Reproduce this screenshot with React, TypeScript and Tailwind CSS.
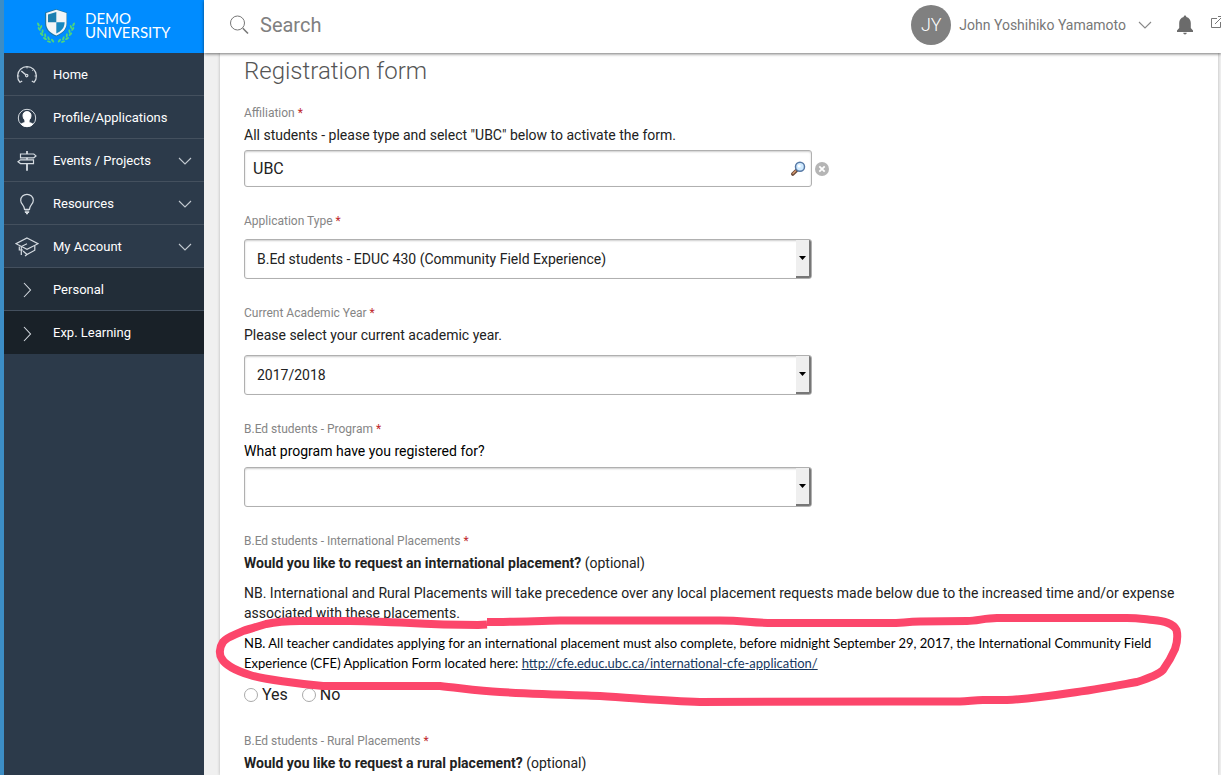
import { useState } from "react"
import type { ReactNode } from "react"

function HomeIcon() {
  return (
    <svg viewBox="0 0 24 24" className="h-6 w-6" fill="none" stroke="currentColor" strokeWidth="1.2">
      <path d="M7.200 18 L5 19.300 A9.400 9.400 0 1 1 19 19.300 L16.800 18" />
      <path d="M2.800 13 h1.600 M19.600 13 h1.600 M18.300 6.700 l-1 1 M12 3.800 v1.600" strokeWidth="1" />
      <path d="M6.300 8 L10.800 11.800" strokeWidth="1.500" />
      <circle cx="11.700" cy="12.600" r="1.200" />
    </svg>
  )
}

function ProfileIcon() {
  return (
    <svg viewBox="0 0 24 24" className="h-6 w-6" fill="none" stroke="currentColor" strokeWidth="1">
      <circle cx="12" cy="12" r="8.7" />
      <path
        d="M12 5.6 c-2.6 0 -4 1.6 -4 3.8 c0 1.8 .7 3.6 1.9 4.6 v1.8 c0 1.2 -3 1.2 -3.8 2.4 C8 20 10 20.6 12 20.6 s4 -.6 5.9 -2.4 c-.8 -1.2 -3.8 -1.2 -3.8 -2.4 V14 c1.2 -1 1.9 -2.8 1.9 -4.6 c0 -2.2 -1.4 -3.8 -4 -3.8z"
        fill="#fff"
        stroke="#fff"
      />
    </svg>
  )
}

function SignpostIcon() {
  return (
    <svg viewBox="0 0 24 24" className="h-6 w-6" fill="none" stroke="currentColor" strokeWidth="1.2">
      <path d="M5.500 5 H18.800 L21 6.900 L18.800 8.800 H5.500z M18.500 10.800 H5.500 L3 12.700 L5.500 14.600 H18.500z" />
      <path d="M12 2 V5 M12 8.800 v2 M12 14.600 V21.800" strokeWidth="1.800" />
    </svg>
  )
}

function BulbIcon() {
  return (
    <svg viewBox="0 0 24 24" className="h-6 w-6" fill="none" stroke="currentColor" strokeWidth="1.2">
      <path d="M9.500 17.300 C9.500 13.500 5.700 12 5.700 8.400 C5.700 4.800 8.500 2.300 12 2.300 s6.300 2.500 6.300 6.100 C18.300 12 14.500 13.500 14.500 17.300z" />
      <path d="M9.700 19 h4.600 M9.900 20.400 h4.200 M11 21.700 h2" />
    </svg>
  )
}

function CapIcon() {
  return (
    <svg viewBox="0 0 24 24" className="h-6 w-6" fill="none" stroke="currentColor" strokeWidth="1.2">
      <path d="M12 3 L23 8.700 L12 14.400 L1 8.700z" />
      <path d="M12 8.700 L6.300 11.500 V20 M4.300 11.500 V15 H8 M8 16 L12 19.500 L19.800 15.200 V10.600 M12 19.500 L10 21" />
    </svg>
  )
}

function ArrowRight() {
  return (
    <svg viewBox="0 0 24 24" className="h-6 w-6" fill="none" stroke="currentColor" strokeWidth="1.1">
      <path d="M9 5 L15.500 12 L9 19" />
    </svg>
  )
}

function ChevronDown() {
  return (
    <svg viewBox="0 0 14 8" className="h-2 w-3.5" fill="none" stroke="currentColor" strokeWidth="1.1">
      <path d="M1 1 L7 7 L13 1" />
    </svg>
  )
}

// leaves of one laurel branch: x, y, angle
const leaves = [
  [2.4, 15.5, 65],
  [5, 18, 110],
  [3.2, 20, 55],
  [6.5, 22.5, 100],
  [5.6, 25.2, 45],
  [9.2, 26.4, 85],
  [9, 29.6, 30],
  [12.6, 29.3, 70],
  [13, 32.6, 15],
  [16.6, 31.6, 50],
]

function Crest() {
  return (
    <svg viewBox="0 0 40 36" className="h-9 w-10">
      {["left", "right"].map((side) => (
        <g key={side} fill="#4fd67a" transform={side === "right" ? "translate(40 0) scale(-1 1)" : undefined}>
          {leaves.map(([x, y, angle], i) => (
            <ellipse key={i} cx={x} cy={y} rx="2.200" ry="1" transform={`rotate(${angle} ${x} ${y})`} />
          ))}
        </g>
      ))}
      <path d="M20 0 L31 3.400 V14.500 C31 21 26.500 25 20 27.500 C13.500 25 9 21 9 14.500 V3.400z" fill="#1a76a6" />
      <path d="M20.300 .8 L30.500 4 V14.500 C30.500 20 26.500 24 20.300 26.500 C14 24 10.200 20 10.200 14.500 V4z" fill="#f1f5f7" />
      <path d="M20.300 3 V13.300 H12 V5.600z" fill="#1b7fb0" />
      <path d="M20.300 13.300 H28.600 C28.600 19 25.500 22 20.300 24.400z" fill="#1687c0" />
    </svg>
  )
}

function LensIcon() {
  return (
    <svg viewBox="0 0 16 16" className="h-4 w-4">
      <path d="M6.500 9.500 L2.800 13" stroke="#6b4a3a" strokeWidth="3.600" strokeLinecap="round" />
      <path d="M5.500 10 L3 12.400" stroke="#d59a70" strokeWidth="1.400" strokeLinecap="round" />
      <circle cx="10" cy="5.700" r="4.500" fill="#cfeaff" stroke="#5779a5" strokeWidth="1.500" />
      <circle cx="9.200" cy="4.900" r="1.500" fill="#fff" />
    </svg>
  )
}

const menu = [
  { label: "Home", icon: <HomeIcon /> },
  { label: "Profile/Applications", icon: <ProfileIcon /> },
  { label: "Events / Projects", icon: <SignpostIcon />, expandable: true },
  { label: "Resources", icon: <BulbIcon />, expandable: true },
  { label: "My Account", icon: <CapIcon />, expandable: true },
  { label: "Personal", icon: <ArrowRight />, bg: "bg-[#222d38]" },
  { label: "Exp. Learning", icon: <ArrowRight />, bg: "bg-[#192128]" },
]

function Sidebar() {
  return (
    <aside className="w-[204px] shrink-0 border-l-4 border-[#3c8dc5] bg-[#2c3a4a]">
      <div className="flex h-[53px] items-center gap-[9px] bg-[#008cff] pl-8 text-white">
        <Crest />
        <div className="pb-1 font-['Lato',sans-serif] text-[15px] leading-[14px]">
          DEMO
          <br />
          UNIVERSITY
        </div>
      </div>
      <nav>
        {menu.map((item) => (
          <a
            key={item.label}
            href="#"
            className={`flex h-[43px] items-center border-b border-[#44505e] pt-0.5 pr-3 pl-[11px] text-[13px] text-white last:border-b-0 ${item.bg ?? ""}`}
          >
            <span className="text-[#d5dbe1]">{item.icon}</span>
            <span className="ml-3.5 flex-1">{item.label}</span>
            {item.expandable && (
              <span className="text-[#c3cad1]">
                <ChevronDown />
              </span>
            )}
          </a>
        ))}
      </nav>
    </aside>
  )
}

function TopBar() {
  return (
    <header className="relative z-10 flex h-[53px] shrink-0 items-center bg-white pb-[3px] pl-6 text-[#777] shadow-[0_1px_3px_rgba(0,0,0,0.55)]">
      <label className="flex min-w-0 flex-1 items-center gap-2">
        <svg viewBox="0 0 24 24" className="h-6 w-6 shrink-0" fill="none" stroke="currentColor">
          <circle cx="9.500" cy="10" r="7" strokeWidth="1" />
          <path d="M14.800 15.300 L20 20.500" strokeWidth="1.600" />
        </svg>
        <input
          type="text"
          placeholder="Search"
          aria-label="Search"
          className="min-w-0 flex-1 text-xl outline-none placeholder:text-[#808080]"
        />
      </label>
      <button className="flex shrink-0 items-center gap-2 text-sm">
        <span className="flex h-10 w-10 items-center justify-center rounded-full bg-[#808080] text-lg font-light text-white">
          JY
        </span>
        John Yoshihiko Yamamoto
        <span className="ml-1 text-[#888]">
          <ChevronDown />
        </span>
      </button>
      <button aria-label="Notifications" className="ml-6 shrink-0">
        <svg viewBox="0 0 18 20" className="h-5 w-[18px]" fill="#6b6b6b">
          <path d="M9 .5 c.9 0 1.300 .6 1.300 1.400 c2.900 .7 4.500 3 4.500 6 v5 l2.200 2.600 v1.500 H1 v-1.500 L3.200 12.900 v-5 c0 -3 1.600 -5.300 4.500 -6 C7.700 1.100 8.100 .5 9 .5z M7.300 17.800 h3.400 c0 1 -.7 1.700 -1.700 1.700 s-1.700 -.7 -1.700 -1.700z" />
        </svg>
      </button>
      <button aria-label="Open in new window" className="-mr-[3px] mb-1.5 ml-4 shrink-0">
        <svg viewBox="0 0 14 14" className="h-3.5 w-3.5" fill="none" stroke="#777" strokeWidth="1">
          <path d="M7 3.500 H1.500 V12.500 H10.500 V7 M5 9 L12.500 1.500 M8 1.500 H12.500 V6" />
        </svg>
      </button>
    </header>
  )
}

function FieldLabel({ htmlFor, children }: { htmlFor?: string; children: ReactNode }) {
  return (
    <label htmlFor={htmlFor} className="block text-xs leading-5 text-[#858585]">
      {children} <span className="text-[#c0282d]">*</span>
    </label>
  )
}

function SelectBox({ id, options }: { id: string; options: string[] }) {
  return (
    <div className="relative max-w-[568px]">
      <select
        id={id}
        className="block h-10 w-full appearance-none rounded-[3px] border border-[#b0b0b0] bg-white pr-6 pl-3 text-sm text-[#222] shadow-[inset_0_1px_2px_rgba(0,0,0,0.2)] outline-none"
      >
        {options.map((option) => (
          <option key={option}>{option}</option>
        ))}
      </select>
      <span className="pointer-events-none absolute inset-y-px right-px flex w-[15px] items-center justify-center rounded-r-[2px] border-r-2 border-b-2 border-[#777] bg-[#efefef]">
        <svg viewBox="0 0 7 4" className="h-1 w-[7px]">
          <path d="M0 0 H7 L3.500 4z" />
        </svg>
      </span>
    </div>
  )
}

// hand-drawn marker loop around the second note
function MarkerLoop() {
  return (
    <svg
      viewBox="212 613 972 96"
      className="pointer-events-none absolute -top-5 -left-8 h-24 w-[972px] max-w-none"
      fill="none"
      stroke="#fc466b"
      strokeWidth="8"
      strokeLinejoin="round"
    >
      <path d="M487 624.500 L478 625 C440 625 410 623 400 622.500 C380 622 370 621 350 621 L300 621 C285 621 275 622 266 624 C256 627 249 629 243 631 C235 635 227 637 223 642 C219 648 219 655 222 659 C226 666 240 672 250 675 C262 679 300 684 323 686 L440 686 C460 688 480 691 500 692 C535 694 570 695 600 696 C635 698 665 701 700 702 L890 701.500 L960 701.500 C970 701 975 700 983 700 L1007 700 C1030 699 1050 696 1070 693 C1095 690 1115 686 1137 682 C1149 678 1158 675 1163 670 C1168 663 1172 656 1175 649 C1177 643 1178 636 1176.500 630 C1173 623 1164 621 1153 620 C1143 619 1137 618 1127 618 H997 C985 618 977 621 967 621 L920 621.500 C905 622 900 623 890 623 H773 C750 623 745 620.500 720 620.500 H560 C535 621 510 622 487 622" />
    </svg>
  )
}

export default function App() {
  const [affiliation, setAffiliation] = useState("UBC")

  return (
    <div className="flex h-screen overflow-hidden bg-[#f0f0f0] font-['Roboto',sans-serif] text-sm text-[#222]">
      <Sidebar />
      <div className="flex min-w-0 flex-1 flex-col">
        <TopBar />
        <main className="mr-[3px] ml-4 min-h-0 flex-1 bg-white px-6 shadow-[0_0_3px_rgba(0,0,0,0.25)]">
          <h1 className="text-2xl leading-9 font-light text-[#555]">Registration form</h1>
          <form className="mt-3.5 flex flex-col gap-6">
            <div>
              <FieldLabel htmlFor="affiliation">Affiliation</FieldLabel>
              <p className="leading-6">All students - please type and select "UBC" below to activate the form.</p>
              <div className="mt-[3px] flex items-center gap-[3px]">
                <div className="flex h-[37px] w-[568px] items-center rounded-[3px] border border-[#b0b0b0] pr-[5px] pl-2 shadow-[inset_0_1px_2px_rgba(0,0,0,0.2)]">
                  <input
                    id="affiliation"
                    type="text"
                    value={affiliation}
                    onChange={(e) => setAffiliation(e.target.value)}
                    className="min-w-0 flex-1 text-base outline-none"
                  />
                  <button type="button" aria-label="Look up affiliation">
                    <LensIcon />
                  </button>
                </div>
                <button type="button" aria-label="Clear affiliation" onClick={() => setAffiliation("")}>
                  <svg viewBox="0 0 14 14" className="h-3.5 w-3.5">
                    <circle cx="7" cy="7" r="7" fill="#b5b5b5" />
                    <path d="M4.300 4.300 L9.700 9.700 M9.700 4.300 L4.300 9.700" stroke="#fff" strokeWidth="1.800" />
                  </svg>
                </button>
              </div>
            </div>

            <div>
              <FieldLabel htmlFor="application-type">Application Type</FieldLabel>
              <div className="mt-2">
                <SelectBox id="application-type" options={["B.Ed students - EDUC 430 (Community Field Experience)"]} />
              </div>
            </div>

            <div>
              <FieldLabel htmlFor="year">Current Academic Year</FieldLabel>
              <p className="leading-6">Please select your current academic year.</p>
              <div className="mt-2">
                <SelectBox id="year" options={["2017/2018"]} />
              </div>
            </div>

            <div>
              <FieldLabel htmlFor="program">B.Ed students - Program</FieldLabel>
              <p className="leading-6 text-black">What program have you registered for?</p>
              <div className="mt-1">
                <SelectBox id="program" options={[""]} />
              </div>
            </div>

            <div>
              <FieldLabel>B.Ed students - International Placements</FieldLabel>
              <p className="leading-6">
                <b>Would you like to request an international placement?</b> (optional)
              </p>
              <p className="mt-2 leading-5">
                NB. International and Rural Placements will take precedence over any local placement requests made below
                due to the increased time and/or expense associated with these placements.
              </p>
              <div className="relative mt-2.5">
                <p className="font-['Lato',sans-serif] text-[13px] leading-5 text-black">
                  NB. All teacher candidates applying for an international placement must also complete, before midnight
                  September 29, 2017, the International Community Field Experience (CFE) Application Form located here:{" "}
                  <a href="#" className="text-[#17375e] underline">
                    http://cfe.educ.ubc.ca/international-cfe-application/
                  </a>
                </p>
                <MarkerLoop />
              </div>
              <div className="mt-3 mb-0.5 flex gap-3.5 text-base leading-5">
                {["Yes", "No"].map((answer) => (
                  <label key={answer} className="flex items-center gap-1">
                    <input
                      type="radio"
                      name="international"
                      className="h-3.5 w-3.5 appearance-none rounded-full border border-[#aaa] bg-white checked:bg-[#555]"
                    />
                    {answer}
                  </label>
                ))}
              </div>
            </div>

            <div>
              <FieldLabel>B.Ed students - Rural Placements</FieldLabel>
              <p className="leading-6">
                <b>Would you like to request a rural placement?</b> (optional)
              </p>
            </div>
          </form>
        </main>
      </div>
    </div>
  )
}
